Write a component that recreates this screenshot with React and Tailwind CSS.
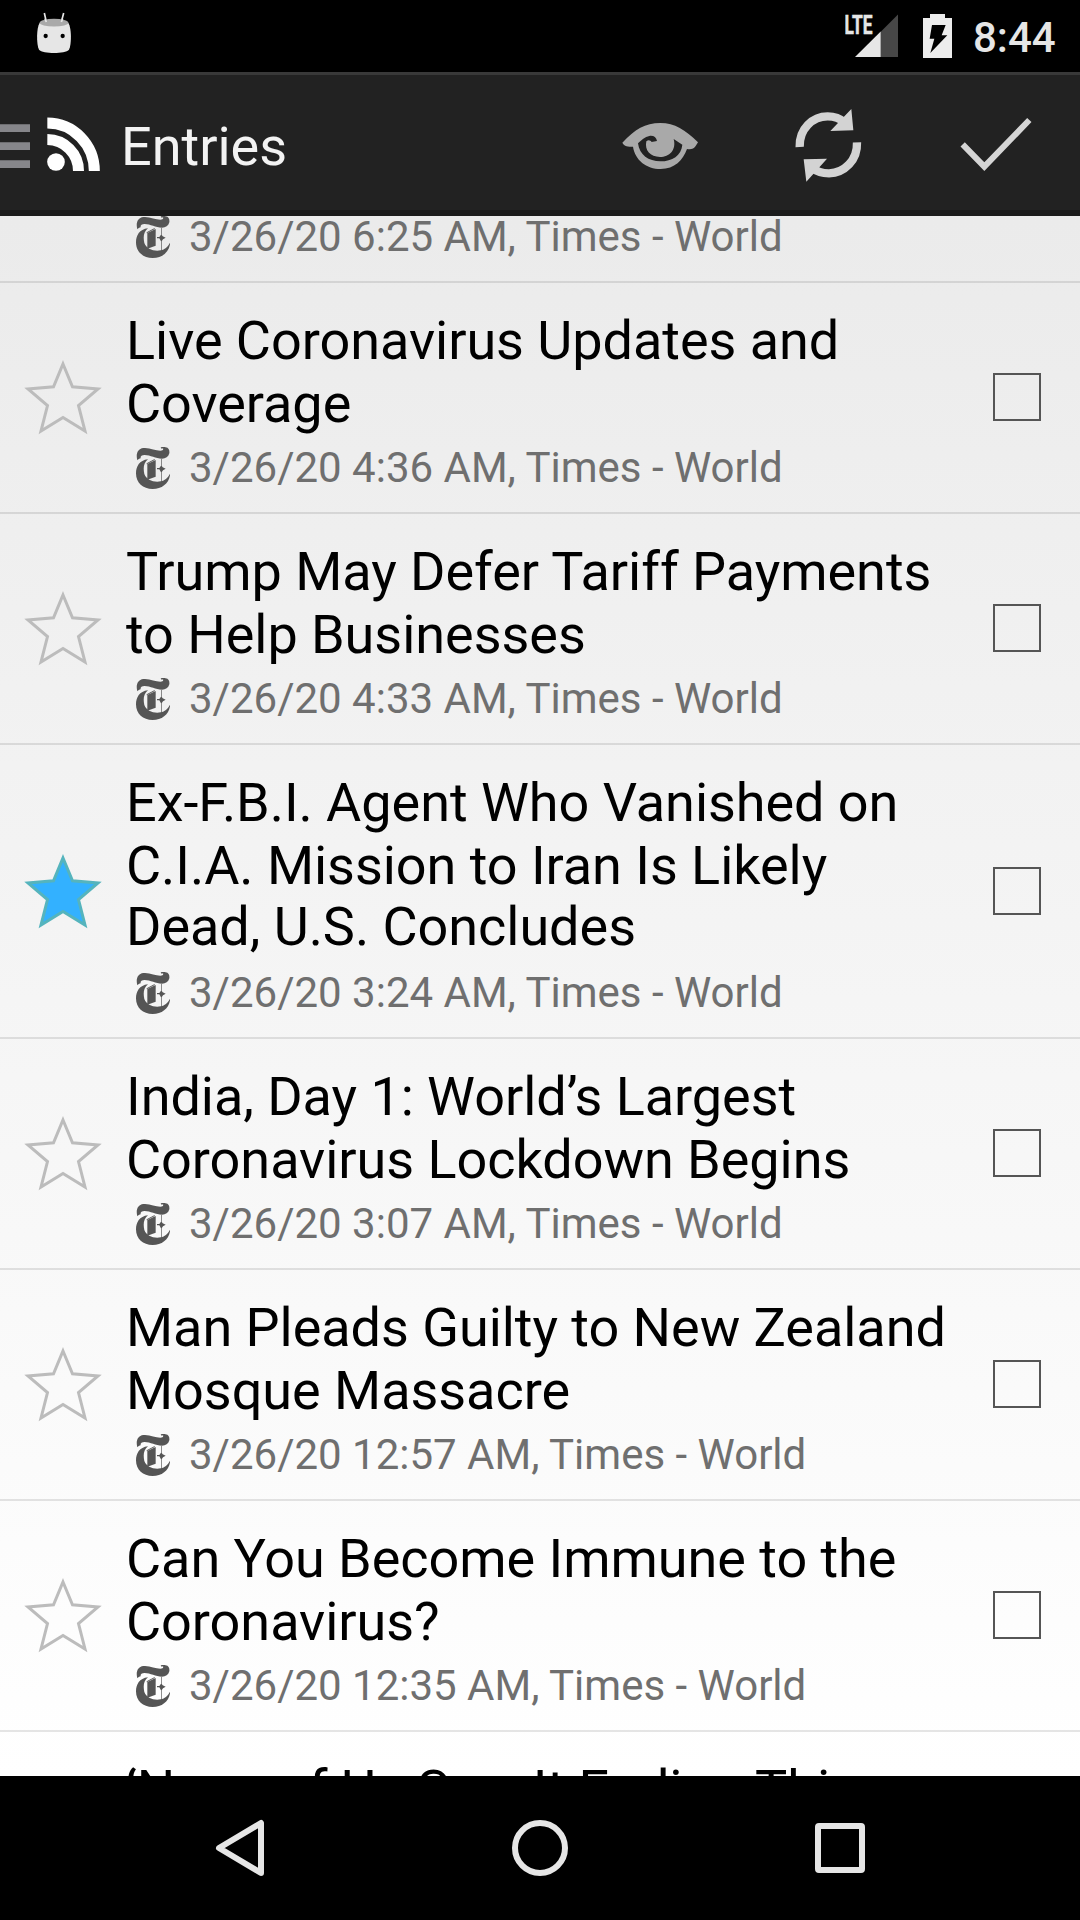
const ENTRIES = [
  { lines: ["Live Coronavirus Updates and", "Coverage"], time: "4:36 AM" },
  { lines: ["Trump May Defer Tariff Payments", "to Help Businesses"], time: "4:33 AM" },
  {
    lines: ["Ex-F.B.I. Agent Who Vanished on", "C.I.A. Mission to Iran Is Likely", "Dead, U.S. Concludes"],
    time: "3:24 AM",
    starred: true,
  },
  { lines: ["India, Day 1: World’s Largest", "Coronavirus Lockdown Begins"], time: "3:07 AM" },
  { lines: ["Man Pleads Guilty to New Zealand", "Mosque Massacre"], time: "12:57 AM" },
  { lines: ["Can You Become Immune to the", "Coronavirus?"], time: "12:35 AM" },
];

function FeedIcon() {
  return (
    <svg className="h-[42px] w-[34px] shrink-0" viewBox="48 42 102 126" fill="#555">
      <path d="M52 82C47 64 52 47 70 45C89 43 106 53 121 53C128 53 131 50 129 46C126 47 123 47 122 44C125 41 132 40 137 43C147 44 149 53 148 61C145 72 137 77 126 77C107 77 91 66 74 66C64 66 61 70 62 76C58 76 55 79 52 82Z" />
      <path d="M84 79C58 82 48 101 48 121C48 150 69 168 98 168C128 168 149 150 151 120C143 137 132 143 122 145C102 149 79 141 73 123C69 105 71 89 84 79Z" />
      <path d="M82 93L107 81V131L82 140Z" />
      <path d="M80 91L104 78V81L80 94Z" />
      <path d="M123 78H125V98L128 103L137 107L129 112L125 118V145H123V118L118 109H111V105H118L123 98Z" />
    </svg>
  );
}

function Star({ filled }) {
  return (
    <svg className="h-[84px] w-[84px]" viewBox="0 0 84 84">
      <path
        d="M42 9L51.500 31.800L77 34L57.500 50.500L64 76L42 62.500L20 76L26.500 50.500L7 34L32.500 31.800Z"
        fill={filled ? "#33b1ff" : "none"}
        stroke={filled ? "#55b4bd" : "#bcbcbc"}
        strokeWidth="3"
      />
    </svg>
  );
}

function Meta({ time }) {
  return (
    <div className="flex h-[49px] items-center pl-[10px] text-[42px] leading-[49px] whitespace-pre text-[#6f6f6f]">
      <FeedIcon />
      <span className="ml-[19px]">3/26/20 {time}, Times - World</span>
    </div>
  );
}

function Entry({ entry }) {
  return (
    <li className="flex shrink-0 items-stretch border-b-2 border-black/10">
      <div className="flex w-[126px] items-center justify-center pb-px">
        <Star filled={entry.starred} />
      </div>
      <div className="flex-1 pt-[26px] pb-5">
        <h2 className="mb-2 text-[54px] leading-[63px] font-normal tracking-[-0.04px] text-black">
          {entry.lines.map((line) => (
            <span key={line} className="block whitespace-nowrap nth-3:-mt-0.5 nth-3:pb-0.5">{line}</span>
          ))}
        </h2>
        <Meta time={entry.time} />
      </div>
      <div className="flex w-[87px] items-center pb-px">
        <div className="size-12 border-2 border-[#555]" />
      </div>
    </li>
  );
}

function StatusBar() {
  return (
    <header className="flex h-[72px] shrink-0 items-start justify-between bg-black">
      <svg className="mt-[10px] ml-9 h-11 w-9" viewBox="108 30 108 132">
        <path d="M133 39L139 66M191 39L184 66" stroke="#e6e6e6" strokeWidth="5" />
        <path d="M119 68C109 84 109 132 117 149C129 162 195 162 207 149C215 132 215 84 205 68Z" fill="#e6e6e6" />
        <ellipse cx="162" cy="68" rx="43" ry="11.500" fill="#a9a9a9" />
        <path d="M135 56L139 66M188 56L184 66" stroke="#e6e6e6" strokeWidth="5" />
        <circle cx="137" cy="108" r="6.500" />
        <circle cx="188" cy="108" r="6.500" />
      </svg>
      <div className="flex">
        <svg className="h-[72px] w-[54px]" viewBox="845 0 54 72">
          <text x="844.500" y="33.500" fontSize="26" fontWeight="700" fill="#e6e6e6" stroke="#e6e6e6" strokeWidth="0.5" textLength="28" lengthAdjust="spacingAndGlyphs">LTE</text>
          <path d="M898 14.500V57H880.500V32Z" fill="#474747" />
          <path d="M855 57L880.700 31.500V57Z" fill="#e6e6e6" />
        </svg>
        <svg className="ml-6 h-[72px] w-[29px]" viewBox="969 0 87 216">
          <path d="M969 54H990V42H1035V54H1056V174H969Z" fill="#ececec" />
          <path d="M996 75H1037L1025 106H1042L991 159L1003 116H989Z" fill="#000" />
        </svg>
        <span className="mr-6 ml-[21px] w-[83px] pt-[13px] text-[42px] leading-[49px] font-medium text-[#e6e6e6]">8:44</span>
      </div>
    </header>
  );
}

function ActionBar() {
  return (
    <nav className="flex h-36 shrink-0 items-stretch border-t-[3px] border-b-[6px] border-t-[#393939] border-b-[#1b1b1b] bg-[#222]">
      <svg className="h-[135px] w-[121px]" viewBox="0 225 363 405">
        <path d="M0 373H90V396H0ZM0 427H90V450H0ZM0 481H90V504H0Z" fill="#86868a" />
        <circle cx="168" cy="486" r="26.500" fill="#fff" />
        <path d="M142 418.500A94 94 0 0 1 235.500 513M142 369A141 144 0 0 1 283 513" fill="none" stroke="#fff" strokeWidth="33" />
      </svg>
      <h1 className="flex-1 pt-[40px] text-[54px] leading-[63px] font-normal text-[#f3f3f3]">Entries</h1>
      <svg className="h-[135px] w-[168px]" viewBox="-72 225 504 405" fill="#a9a9a9">
        <path
          fillRule="evenodd"
          d="M67 428C105 388 135 369 181 369C225 369 255 389 294 427L287 438C281 447 273 449 261 447C249 480 224 507 182 507C139 507 105 480 99 440C84 440 73 439 67 428ZM114 430C118 465 146 484 181 484C217 484 244 467 247 434L221 417C230 450 208 471 180 471C151 471 133 451 139 424C145 418 151 420 155 426L171 423C169 412 160 406 148 408C135 411 124 420 114 430Z"
        />
      </svg>
      <svg className="h-[135px] w-[168px]" viewBox="432 225 504 405">
        <path d="M599 441C597 386 638 349 683 349C703 349 720 355 735 368M771 427C773 481 733 519 687 520C667 520 650 515 635 502" fill="none" stroke="#d3d3d3" strokeWidth="25" />
        <path d="M754 327L760 391L691 393ZM611 478L681 476L619 545Z" fill="#d3d3d3" />
      </svg>
      <svg className="h-[135px] w-[168px]" viewBox="936 225 504 405">
        <path d="M1088 433L1153 500L1288 360" fill="none" stroke="#d5d5d5" strokeWidth="18" />
      </svg>
    </nav>
  );
}

function NavigationBar() {
  return (
    <footer className="flex h-36 shrink-0 items-center justify-center bg-black">
      <svg className="h-36 w-[300px]" viewBox="90 1776 300 144" fill="none" stroke="#e6e6e6" strokeWidth="6" strokeLinejoin="round">
        <path d="M219 1848L261 1823V1873Z" />
      </svg>
      <svg className="h-36 w-[300px]" viewBox="390 1776 300 144" fill="none" stroke="#e6e6e6" strokeWidth="6">
        <circle cx="540" cy="1848" r="25" />
      </svg>
      <svg className="h-36 w-[300px]" viewBox="690 1776 300 144" fill="none" stroke="#e6e6e6" strokeWidth="6">
        <rect x="818" y="1826" width="44" height="44" rx="1" />
      </svg>
    </footer>
  );
}

export default function App() {
  return (
    <div className="flex h-[1920px] w-[1080px] flex-col overflow-hidden bg-black font-['Roboto',sans-serif]">
      <StatusBar />
      <ActionBar />
      <ul className="flex h-[1560px] shrink-0 flex-col overflow-hidden bg-linear-to-b from-[#ebebeb] to-white">
        <li className="flex h-[67px] shrink-0 flex-col justify-end overflow-hidden border-b-2 border-black/10 pb-5 pl-[126px]">
          <Meta time="6:25 AM" />
        </li>
        {ENTRIES.map((entry) => (
          <Entry key={entry.time} entry={entry} />
        ))}
        <li className="pt-[26px] pl-[126px] text-[54px] leading-[63px] whitespace-nowrap text-black">
          ‘None of Us Saw It Ending This
        </li>
      </ul>
      <NavigationBar />
    </div>
  );
}
